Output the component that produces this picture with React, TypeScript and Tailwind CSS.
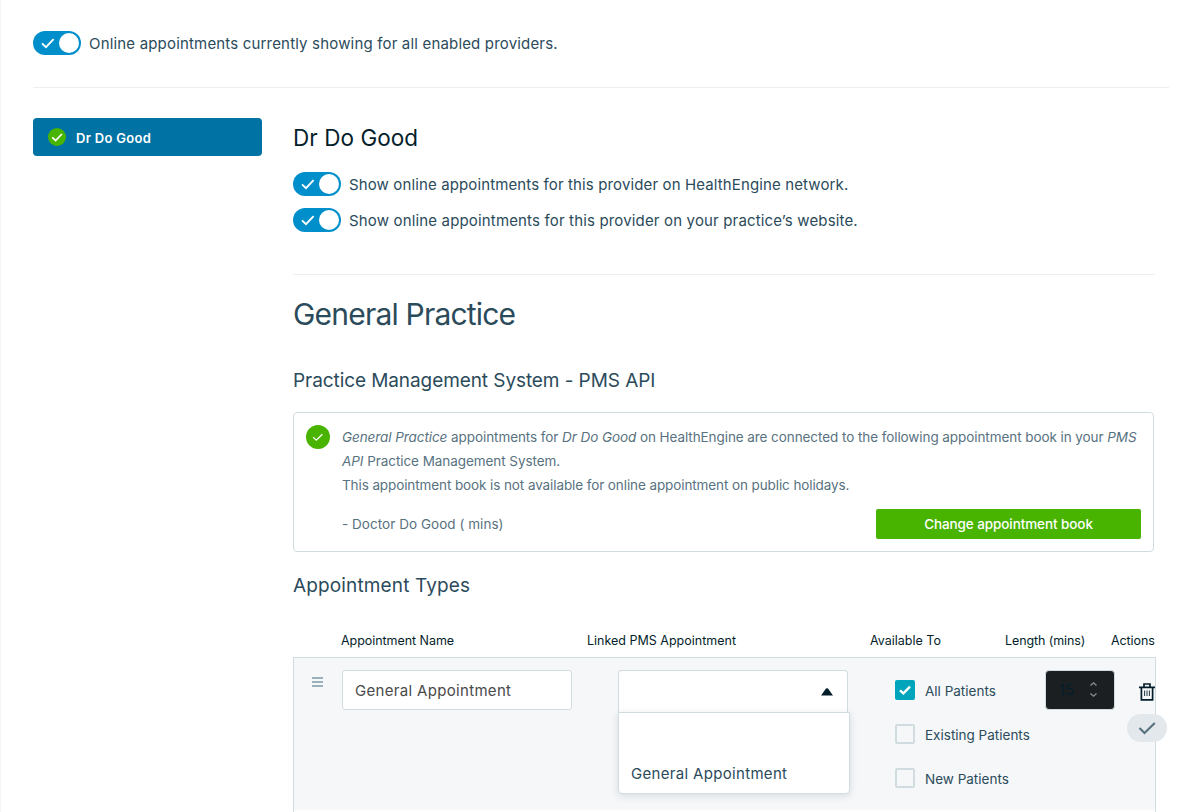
import React from "react";

function Toggle() {
  return (
    <span className="flex h-6 w-12 shrink-0 items-center justify-between rounded-full bg-[#008fcb] pr-[2px] pl-2">
      <svg width="14" height="12" viewBox="0 0 14 12" fill="none" stroke="#fff" strokeWidth="1.9">
        <path d="M1 6.4 5 10.2 12.6 2.2" />
      </svg>
      <span className="size-5 rounded-full bg-white" />
    </span>
  );
}

function ToggleRow({ children, className }: { children: React.ReactNode; className: string }) {
  return (
    <div className="flex h-6 items-center gap-2">
      <Toggle />
      <span className={"pt-px text-[15px] leading-6 whitespace-nowrap text-[#2b4b5b] " + className}>{children}</span>
    </div>
  );
}

function Patient({ label, checked }: { label: string; checked?: boolean }) {
  return (
    <div className="flex h-5 items-center gap-[10px]">
      {checked ? (
        <span className="flex size-5 shrink-0 items-center justify-center rounded-[2px] bg-[#00a5bc]">
          <svg width="14" height="12" viewBox="0 0 14 12" fill="none" stroke="#fff" strokeWidth="2.4">
            <path d="M2 6.3 5.4 9.4 12 2.6" />
          </svg>
        </span>
      ) : (
        <span className="size-5 shrink-0 rounded-[2px] border-2 border-[#d1dce0]" />
      )}
      <span className="pt-[2px] text-[13.5px] leading-5 whitespace-nowrap text-[#2b4b5b]">{label}</span>
    </div>
  );
}

export default function App() {
  return (
    <div className="h-[812px] w-[1200px] overflow-hidden border-l border-[#f3f4f6] bg-white pt-[31px] pr-[31px] pl-8 font-[Inter,'Liberation_Sans',sans-serif] text-[#2b4b5b]">
      <ToggleRow className="tracking-[0.175px]">Online appointments currently showing for all enabled providers.</ToggleRow>
      <hr className="mt-8 border-[#eceef0]" />

      <div className="mt-[30px] flex gap-[31px]">
        <aside className="w-[229px] shrink-0">
          <div className="flex h-[38px] items-center gap-[10px] rounded-[4px] bg-[#0072a3] pl-[15px]">
            <svg width="18" height="18" viewBox="0 0 18 18" fill="none">
              <circle cx="9" cy="9" r="9" fill="#48b400" />
              <path d="M4.2 9.4 7.6 12.5 13.9 6" stroke="#fff" strokeWidth="1.7" />
            </svg>
            <span className="pt-px text-[13px] leading-5 font-semibold tracking-[0.3px] text-white">Dr Do Good</span>
          </div>
        </aside>

        <main className="w-[863px] shrink-0">
          <h1 className="mt-[5px] h-[30px] text-[22.5px] leading-[30px] tracking-[0.05px] whitespace-nowrap text-[#041e2b]">Dr Do Good</h1>
          <div className="mt-[19px] flex flex-col gap-3">
            <ToggleRow className="tracking-[0.125px]">Show online appointments for this provider on HealthEngine network.</ToggleRow>
            <ToggleRow className="tracking-[0.16px]">Show online appointments for this provider on your practice’s website.</ToggleRow>
          </div>
          <hr className="mt-[42px] w-[862px] border-[#eceef0]" />

          <h2 className="mt-[18px] h-[42px] text-[30px] leading-[42px] tracking-[-0.8px] whitespace-nowrap">General Practice</h2>
          <h3 className="mt-[31px] h-[30px] text-[19px] leading-[30px] tracking-[-0.08px] whitespace-nowrap">Practice Management System - PMS API</h3>

          <section className="mt-4 flex h-[140px] w-[861px] gap-3 rounded-[4px] border border-[#d1dce0] p-3 text-[13.5px] leading-6 text-[#587280]">
            <svg className="shrink-0" width="24" height="24" viewBox="0 0 24 24" fill="none">
              <circle cx="12" cy="12" r="12" fill="#48b400" />
              <path d="M7.2 12.3 10.3 15.2 16.4 9.2" stroke="#fff" strokeWidth="1.3" />
            </svg>
            <div className="min-w-0 flex-1 whitespace-nowrap">
              <p className="tracking-[-0.075px]">
                <em>General Practice</em> appointments for <em>Dr Do Good</em> on HealthEngine are connected to the following appointment book in your <em>PMS</em>
              </p>
              <p className="tracking-[-0.06px]"><em>API</em> Practice Management System.</p>
              <p className="tracking-[-0.1px]">This appointment book is not available for online appointment on public holidays.</p>
              <div className="mt-3 flex items-center justify-between">
                <span className="tracking-[0.04px]">- Doctor Do Good ( mins)</span>
                <button className="h-[30px] w-[265px] rounded-[2px] bg-[#48b400] text-[13.5px] leading-5 font-medium tracking-[-0.09px] text-white">Change appointment book</button>
              </div>
            </div>
          </section>

          <h3 className="mt-[19px] h-[30px] text-[19px] leading-[30px] tracking-[0.14px] whitespace-nowrap">Appointment Types</h3>

          <div className="mt-[30px] grid h-[26px] grid-cols-[246px_283px_135px_106px_45px] pl-12 text-[12.5px] leading-5 whitespace-nowrap text-[#041e2b]">
            <span className="tracking-[-0.05px]">Appointment Name</span>
            <span>Linked PMS Appointment</span>
            <span>Available To</span>
            <span className="tracking-[-0.1px]">Length (mins)</span>
            <span className="tracking-[-0.1px]">Actions</span>
          </div>

          <div className="h-[200px] border border-[#d1dce0]">
            <div className="flex h-[152px] bg-[#f5f7f9] pt-3">
              <svg className="mt-[7px] ml-[18px] shrink-0" width="11" height="11" viewBox="0 0 11 11" fill="#9bb2bc">
                <path d="M0 0h11v2H0zM0 4h11v2H0zM0 8h11v2H0z" />
              </svg>
              <div className="ml-[19px] flex h-10 w-[230px] shrink-0 items-center rounded-[3px] border border-[#d1dce0] bg-white pt-[2px] pl-3 text-[15px] tracking-[0.32px] whitespace-nowrap text-[#4a4a4a]">General Appointment</div>
              <div className="ml-[46px] flex w-[232px] shrink-0 flex-col">
                <div className="flex h-[42px] w-[230px] items-center justify-end rounded-t-[4px] border border-b-0 border-[#d1dce0] bg-white pr-[14px]">
                  <svg width="12" height="8" viewBox="0 0 12 8" fill="#041e2b">
                    <path d="M0 7.5 5 .6Q6-.2 7 .6L12 7.5z" />
                  </svg>
                </div>
                <div className="flex h-[82px] w-[232px] items-end rounded-b-[4px] border border-[#d1dce0] bg-white pb-[7px] pl-3 text-[15px] leading-6 tracking-[0.32px] whitespace-nowrap shadow-[0_2px_8px_rgba(4,30,43,0.12)]">General Appointment</div>
              </div>
              <div className="mt-[10px] ml-[45px] flex w-[150px] shrink-0 flex-col gap-6">
                <Patient label="All Patients" checked />
                <Patient label="Existing Patients" />
                <Patient label="New Patients" />
              </div>
              <div className="flex h-10 w-[70px] shrink-0 items-center justify-between rounded-[4px] border border-[#d1dce0] bg-[#1c1f21] pr-4 pl-[13px]">
                <span className="pt-px text-[15px] text-[#041e2b]">15</span>
                <svg className="-mt-px" width="9" height="17" viewBox="0 0 9 17" fill="none" stroke="#8b8e90" strokeWidth="1.3">
                  <path d="M1.5 4.5 4.5 1.8 7.5 4.5M1.5 12.5 4.5 15.2 7.5 12.5" />
                </svg>
              </div>
              <div className="mt-[13px] ml-3 flex w-10 shrink-0 flex-col items-center gap-[13px]">
                <svg width="16" height="18" viewBox="0 0 16 18" fill="none" stroke="#041e2b" strokeWidth="1.7">
                  <path d="M0 4.3h16M5 4V1h6v3M2.4 4.5v12.3h11.2V4.5" />
                  <path d="M5.6 7.5v5.5M8 7.5v5.5M10.4 7.5v5.5" strokeWidth="0.9" />
                </svg>
                <span className="flex h-7 w-10 items-center justify-center rounded-full bg-[#e2e8ec]">
                  <svg width="18" height="14" viewBox="0 0 18 14" fill="none" stroke="#587280" strokeWidth="2.2">
                    <path d="M1.5 7 6.5 12 16.8 2" />
                  </svg>
                </span>
              </div>
            </div>
          </div>
        </main>
      </div>
    </div>
  );
}
